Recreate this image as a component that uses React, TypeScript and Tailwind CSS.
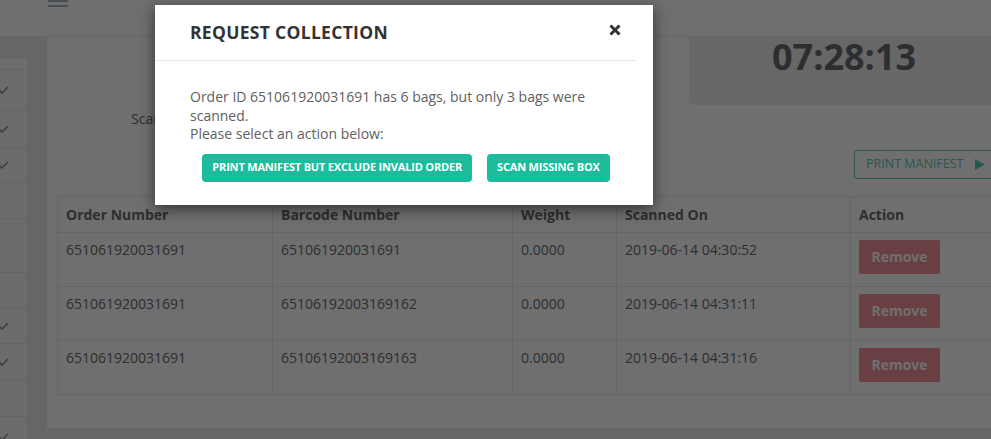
import React from 'react'

const rows = [
  { order: '651061920031691', barcode: '651061920031691', weight: '0.0000', scanned: '2019-06-14 04:30:52' },
  { order: '651061920031691', barcode: '65106192003169162', weight: '0.0000', scanned: '2019-06-14 04:31:11' },
  { order: '651061920031691', barcode: '65106192003169163', weight: '0.0000', scanned: '2019-06-14 04:31:16' },
]

// sidebar items: height + whether it has a chevron
const menu = [
  { h: 41, open: true },
  { h: 37, open: true },
  { h: 35, open: true },
  { h: 36, open: false },
  { h: 54, open: false },
  { h: 36, open: false },
  { h: 35, open: true },
  { h: 36, open: true },
  { h: 37, open: false },
  { h: 40, open: true },
]

function Chevron() {
  return (
    <svg width="14" height="8" viewBox="0 0 14 8" className="-ml-[5px]">
      <path d="M1 1 L7 7 L13 1" fill="none" stroke="#8793a6" strokeWidth="1.6" />
    </svg>
  )
}

export default function App() {
  return (
    <div className="relative w-[991px] h-[439px] overflow-hidden bg-[#e8eaed] font-['Open_Sans',sans-serif] text-[#676a6c]">
      {/* top bar */}
      <div className="h-[37px] bg-white border-b border-[#e7eaec] pl-[48px]">
        <div className="w-[20px] h-[2px] bg-[#a7b1c2]" />
        <div className="w-[20px] h-[2px] bg-[#a7b1c2] mt-[3px]" />
      </div>

      <div className="flex">
        {/* sidebar */}
        <div className="w-[47px] shrink-0 pt-[21px]">
          <div className="w-[27px] bg-[#f5f5f6]">
            <div className="h-[11px] bg-[#fafafa]" />
            {menu.map((m, i) => (
              <div key={i} className="flex items-center border-t border-[#e4e5e8]" style={{ height: m.h }}>
                {m.open && <Chevron />}
              </div>
            ))}
          </div>
        </div>

        {/* main card */}
        <div className="w-[1000px] shrink-0 h-[391px] bg-white px-[10px]">
          <div className="flex h-[159px]">
            <div className="w-[632px] pl-[74px] pt-[71px] text-[14px]">Scan Barcode:</div>
            <div className="w-[320px]">
              <div className="h-[68px] bg-[#ececed] rounded-bl-[6px] flex justify-center">
                <span className="text-[36px] font-bold text-[#676a6c] leading-[40px] pr-[10px]">07:28:13</span>
              </div>
              <button className="ml-[165px] mt-[45px] h-[29px] px-[11px] border border-[#1ab394] rounded-[3px] text-[12.5px] text-[#1ab394] opacity-70 flex items-center gap-[12px] whitespace-nowrap">
                PRINT MANIFEST
                <svg width="10" height="11" viewBox="0 0 10 11"><path d="M0 0 L10 5.5 L0 11 Z" fill="#1ab394" /></svg>
              </button>
            </div>
          </div>

          <table className="border-collapse text-[14px] table-fixed">
            <colgroup>
              <col className="w-[215px]" />
              <col className="w-[240px]" />
              <col className="w-[104px]" />
              <col className="w-[234px]" />
              <col className="w-[180px]" />
            </colgroup>
            <thead>
              <tr className="h-[36px]">
                {['Order Number', 'Barcode Number', 'Weight', 'Scanned On', 'Action'].map((h) => (
                  <th key={h} className="border border-[#e7eaec] px-[8px] text-left font-bold">{h}</th>
                ))}
              </tr>
            </thead>
            <tbody>
              {rows.map((r, i) => (
                <tr key={i} className="h-[54px]">
                  <td className="border border-[#e7eaec] px-[8px] pt-[7px] align-top leading-[20px]">{r.order}</td>
                  <td className="border border-[#e7eaec] px-[8px] pt-[7px] align-top leading-[20px]">{r.barcode}</td>
                  <td className="border border-[#e7eaec] px-[8px] pt-[7px] align-top leading-[20px]">{r.weight}</td>
                  <td className="border border-[#e7eaec] px-[8px] pt-[7px] align-top leading-[20px]">{r.scanned}</td>
                  <td className="border border-[#e7eaec] px-[8px] pt-[7px] align-top leading-[0]">
                    <button className="w-[81px] h-[34px] bg-[#ed5565] opacity-65 text-white font-bold text-[14px] leading-[20px] rounded-[2px]">Remove</button>
                  </td>
                </tr>
              ))}
            </tbody>
          </table>
        </div>
      </div>

      {/* backdrop */}
      <div className="absolute inset-0 bg-black/[0.565]" />

      {/* modal */}
      <div className="absolute left-[155px] top-[5px] w-[498px] h-[200px] bg-white shadow-[0_4px_14px_rgba(0,0,0,0.55)]">
        <div className="flex items-center justify-between h-[56px] mr-[17px] pl-[35px] border-b border-[#e5e5e5]">
          <h3 className="text-[17.5px] font-bold text-[#333] tracking-[0.3px]">REQUEST COLLECTION</h3>
          <svg width="12" height="12" viewBox="0 0 12 12" className="mr-[15px] -mt-[6px]">
            <path d="M1.5 1.5 L10.5 10.5 M10.5 1.5 L1.5 10.5" stroke="#333" strokeWidth="3" />
          </svg>
        </div>
        <div className="pl-[35px] pt-[27px] w-[463px]">
          <p className="text-[14px] leading-[18.5px] text-[#5e6062]">
            Order ID 651061920031691 has 6 bags, but only 3 bags were scanned.
            <br />
            Please select an action below:
          </p>
          <div className="flex justify-center gap-[15px] mt-[10px] pl-[4px]">
            <button className="h-[28px] px-[10px] bg-[#1bbc9b] text-white text-[11px] font-bold rounded-[4px] whitespace-nowrap tracking-[-0.18px]">PRINT MANIFEST BUT EXCLUDE INVALID ORDER</button>
            <button className="h-[28px] px-[10px] bg-[#1bbc9b] text-white text-[11px] font-bold rounded-[4px] whitespace-nowrap tracking-[-0.18px]">SCAN MISSING BOX</button>
          </div>
        </div>
      </div>
    </div>
  )
}
